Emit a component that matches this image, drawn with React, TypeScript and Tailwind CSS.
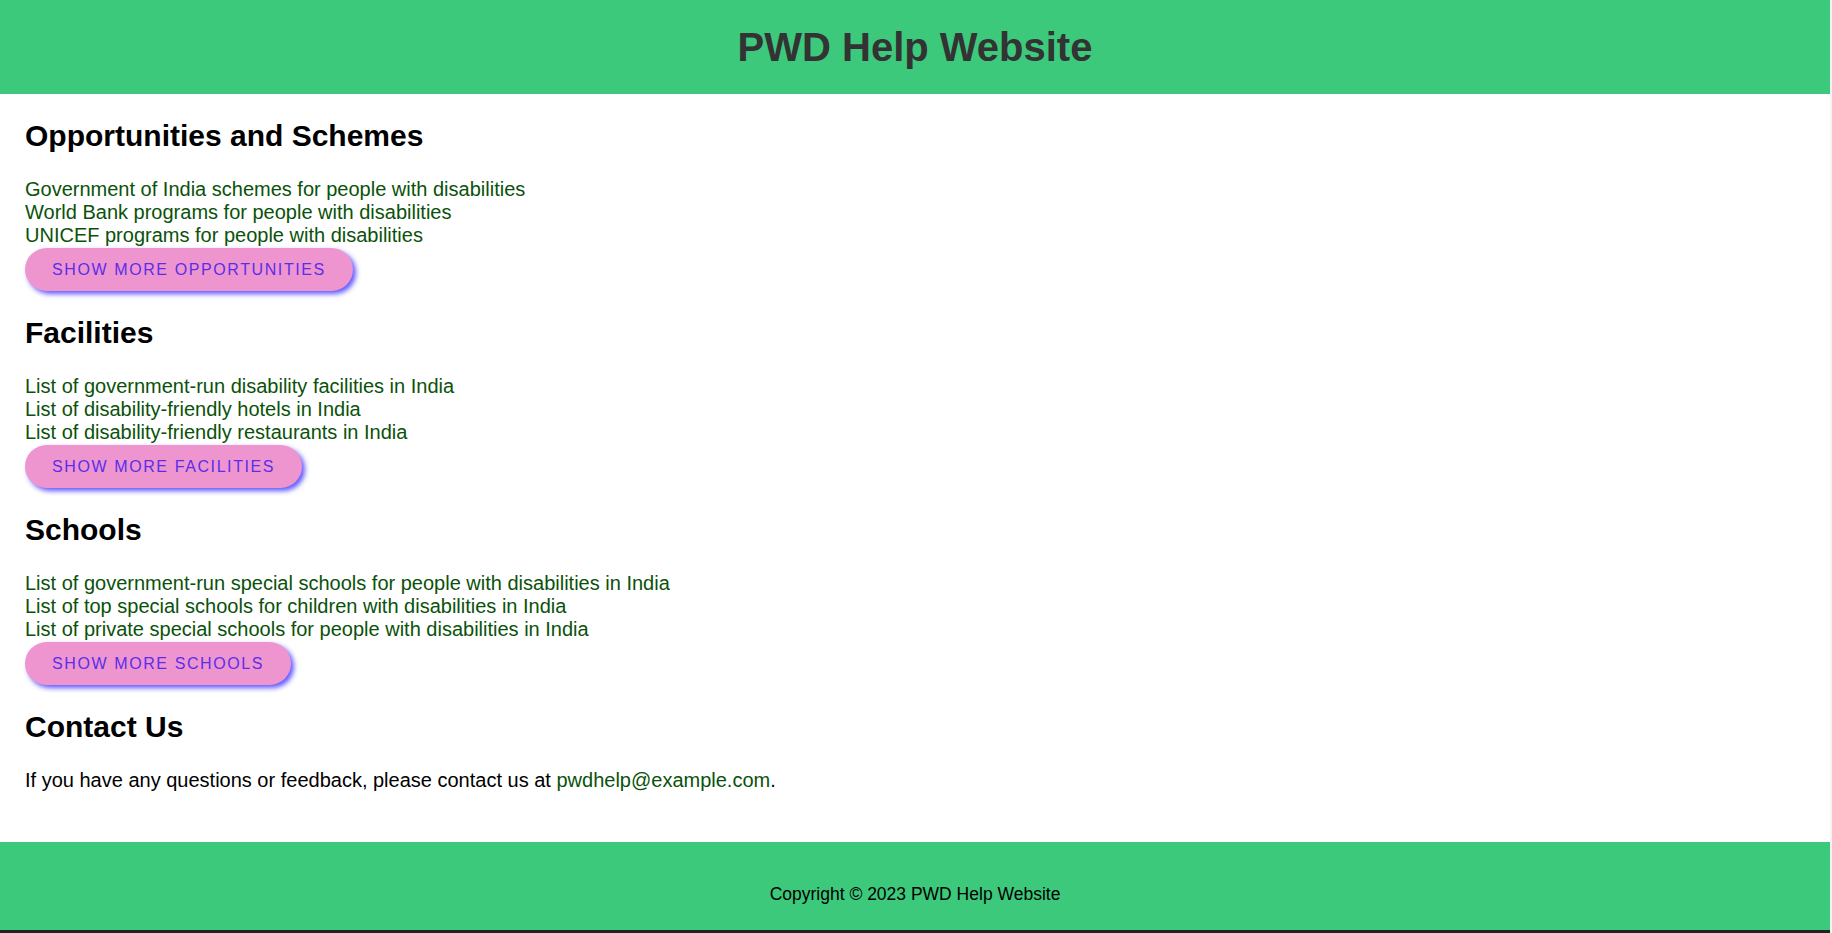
import { ReactNode } from 'react'

const sections: { title: string; items: string[]; more: string }[] = [
  {
    title: 'Opportunities and Schemes',
    items: [
      'Government of India schemes for people with disabilities',
      'World Bank programs for people with disabilities',
      'UNICEF programs for people with disabilities',
    ],
    more: 'Show more opportunities',
  },
  {
    title: 'Facilities',
    items: [
      'List of government-run disability facilities in India',
      'List of disability-friendly hotels in India',
      'List of disability-friendly restaurants in India',
    ],
    more: 'Show more facilities',
  },
  {
    title: 'Schools',
    items: [
      'List of government-run special schools for people with disabilities in India',
      'List of top special schools for children with disabilities in India',
      'List of private special schools for people with disabilities in India',
    ],
    more: 'Show more schools',
  },
]

function Heading ({ children }: { children: ReactNode }) {
  return (
    <h2 className="mt-[25px] mb-[24.5px] text-[30px] leading-[34.5px] font-bold text-black">
      {children}
    </h2>
  )
}

function Section ({ title, items, more }: { title: string; items: string[]; more: string }) {
  return (
    <section>
      <Heading>{title}</Heading>
      <ul className="text-[20px] leading-[23px] text-[#0a520a]">
        {items.map((item) => (
          <li key={item}>
            <a href="#">{item}</a>
          </li>
        ))}
      </ul>
      <button
        className="mt-px h-[43px] pl-[27px] pr-[27px] rounded-full bg-[#ee95d0] text-[#5a2ee8] text-[16px] uppercase tracking-[0.1em] shadow-[3px_3px_5px_rgba(70,60,255,0.85)]"
      >
        {more}
      </button>
    </section>
  )
}

export default function App () {
  return (
    <div className="flex h-[933px] w-[1832px] overflow-hidden font-['Liberation_Sans',Arial,sans-serif]">
      <div className="flex flex-col w-[1830px]">
        <header className="h-[94px] shrink-0 bg-[#3cc97c] flex items-center justify-center">
          <h1 className="text-[40px] leading-[46px] font-bold text-[#333333]">PWD Help Website</h1>
        </header>
        <main className="flex-1 px-[25px]">
          {sections.map((s) => (
            <Section key={s.title} {...s} />
          ))}
          <section>
            <Heading>Contact Us</Heading>
            <p className="mt-[1px] text-[20px] leading-[23px] text-black">
              If you have any questions or feedback, please contact us at{' '}
              <a href="#" className="text-[#0a520a]">pwdhelp@example.com</a>.
            </p>
          </section>
        </main>
        <footer className="h-[88px] shrink-0 bg-[#3cc97c] pt-[42px] text-center">
          <p className="text-[17.5px] leading-[20px] text-black">Copyright © 2023 PWD Help Website</p>
        </footer>
        <div className="h-[3px] shrink-0 bg-[#222222]" />
      </div>
      <div className="w-[2px] bg-[#f3f3f3]" />
    </div>
  )
}
